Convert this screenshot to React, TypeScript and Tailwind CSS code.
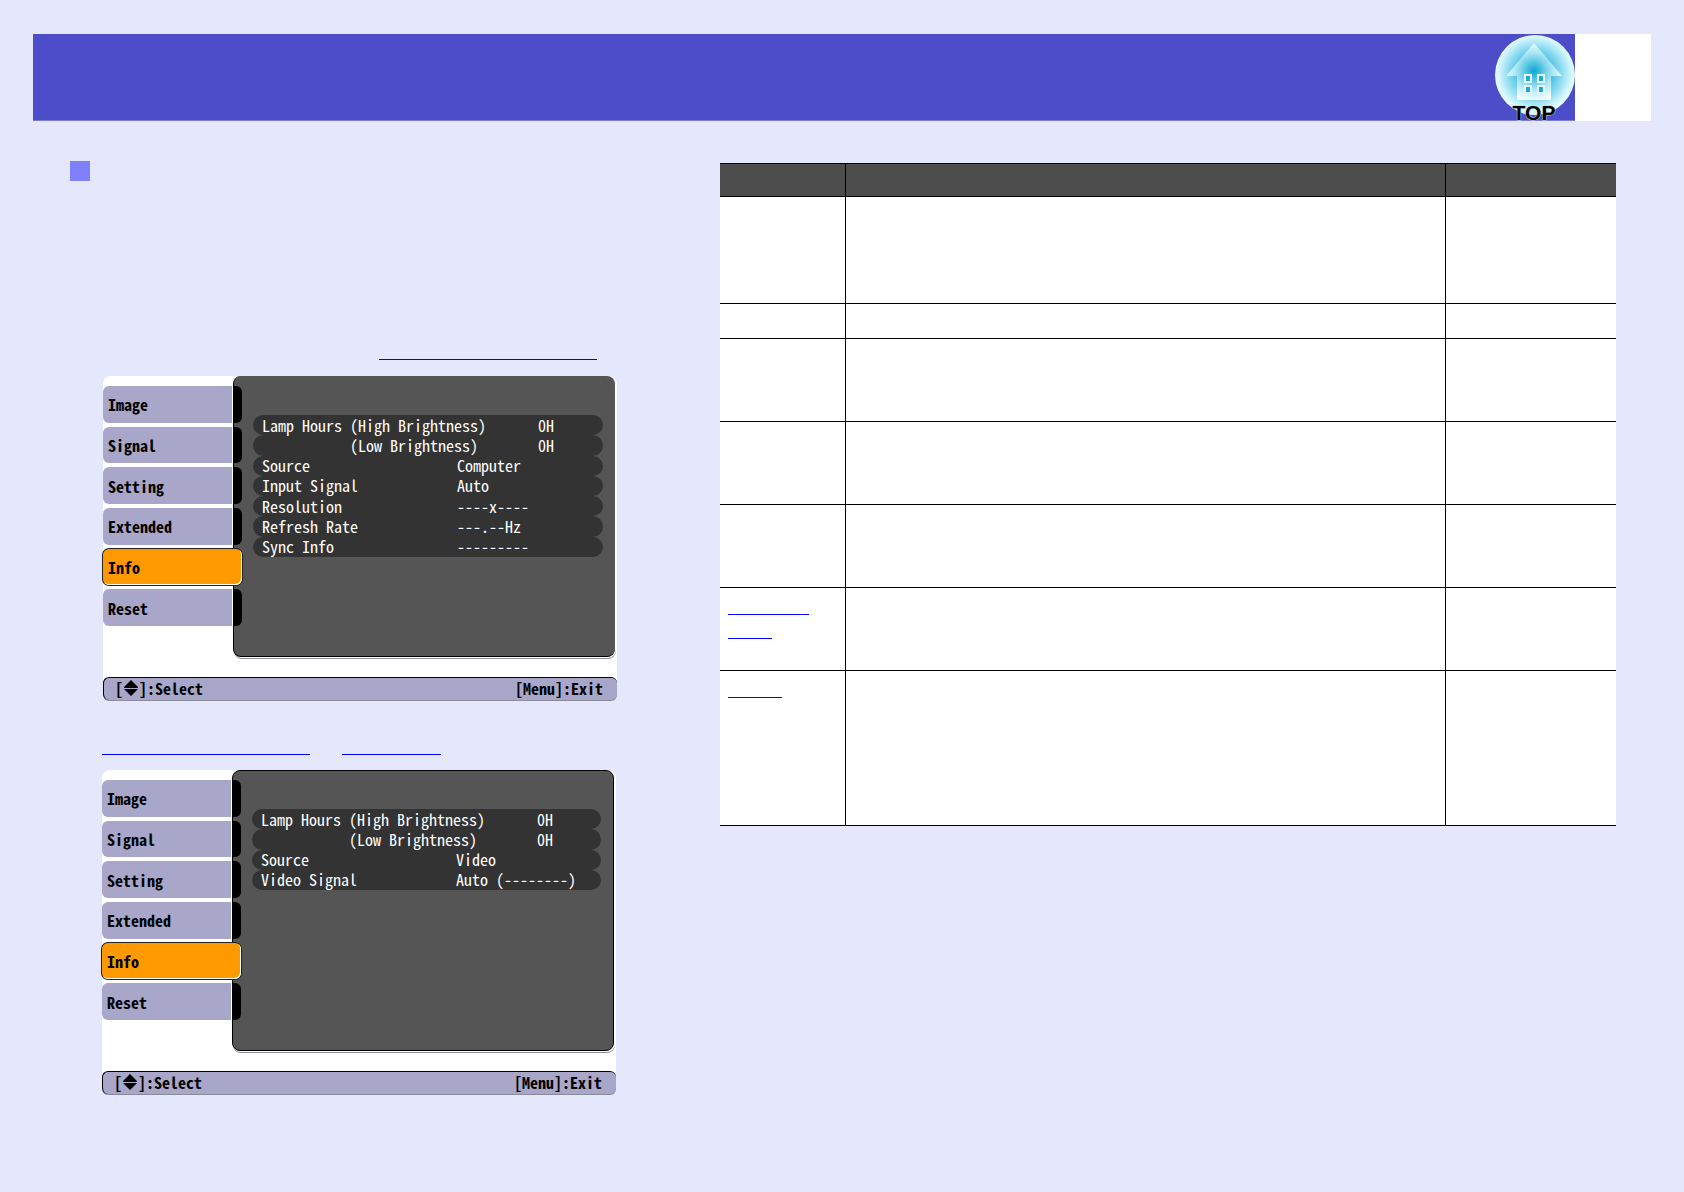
import React from 'react';

type InfoRow = {
  label: string;
  value: string;
  wide?: boolean;
};

const tabs = ['Image', 'Signal', 'Setting', 'Extended', 'Info', 'Reset'];

const lampRows: InfoRow[] = [
  { label: 'Lamp Hours (High Brightness)', value: '0H', wide: true },
  { label: '           (Low Brightness)', value: '0H', wide: true },
];

const computerRows: InfoRow[] = [
  ...lampRows,
  { label: 'Source', value: 'Computer' },
  { label: 'Input Signal', value: 'Auto' },
  { label: 'Resolution', value: '----x----' },
  { label: 'Refresh Rate', value: '---.--Hz' },
  { label: 'Sync Info', value: '---------' },
];

const videoRows: InfoRow[] = [
  ...lampRows,
  { label: 'Source', value: 'Video' },
  { label: 'Video Signal', value: 'Auto (--------)' },
];

// Row heights of the table, with the widths of the links in the first cell
const tableRows = [
  { height: 'h-[107px]', links: [] },
  { height: 'h-[35px]', links: [] },
  { height: 'h-[83px]', links: [] },
  { height: 'h-[83px]', links: [] },
  { height: 'h-[83px]', links: [] },
  { height: 'h-[83px]', links: ['w-[81px]', 'w-[44px]'] },
  { height: 'h-[155px]', links: ['w-[54px]'] },
];

function HomeLogo() {
  return (
    <svg viewBox="0 0 80 86" className="w-20 h-[86px] overflow-visible" role="img" aria-label="Top">
      <defs>
        <radialGradient id="ball" cx="50%" cy="48%" r="52%">
          <stop offset="0" stopColor="#009fd0" />
          <stop offset="0.35" stopColor="#3cbadf" />
          <stop offset="0.65" stopColor="#8fdcf1" />
          <stop offset="0.88" stopColor="#d6f7fd" />
          <stop offset="1" stopColor="#ecfeff" />
        </radialGradient>
        <radialGradient id="house" gradientUnits="userSpaceOnUse" cx="39" cy="36" r="30">
          <stop offset="0" stopColor="#0aa5d3" />
          <stop offset="0.3" stopColor="#5ac7e4" />
          <stop offset="0.65" stopColor="#b4e9f6" />
          <stop offset="1" stopColor="#f4fdff" />
        </radialGradient>
      </defs>
      <circle cx="40" cy="40" r="40" fill="url(#ball)" />
      <path d="M39 8 L67 41 H56 V65 H22 V41 H11 Z" fill="url(#house)" />
      <g fill="#1fa8d0" stroke="#e4f9fe" strokeWidth="2">
        <rect x="30" y="40" width="6" height="7" />
        <rect x="43" y="40" width="6" height="7" />
        <rect x="30" y="51" width="6" height="7" />
        <rect x="43" y="51" width="6" height="7" />
      </g>
      <text
        x="39"
        y="85"
        textAnchor="middle"
        fontFamily="Liberation Sans, Arial, sans-serif"
        fontWeight="bold"
        fontSize="21"
        fill="#000"
        stroke="#b9d3dc"
        strokeWidth="1"
        paintOrder="stroke"
      >
        TOP
      </text>
    </svg>
  );
}

type MenuScreenProps = {
  rows: InfoRow[];
  rowsBox: string;
  outline: string;
};

function MenuScreen({ rows, rowsBox, outline }: MenuScreenProps) {
  return (
    <div className="w-full max-w-[514px] bg-white rounded-t-lg rounded-b-md text-base leading-5 font-bold font-['Noto_Sans_Mono_CJK_JP','Liberation_Mono',monospace]">
      <div className="flex h-[281px]">
        <div className="w-[130px] shrink-0 pt-[10px] pb-[31px] flex flex-col gap-1">
          {tabs.map((tab) =>
            tab === 'Info' ? (
              <button
                key={tab}
                type="button"
                className="relative z-10 flex-1 w-[139px] pl-[5px] text-left rounded-md bg-[#ff9900] text-black shadow-[inset_-1px_-1px_0_#fff,0_0_0_1px_#222]"
              >
                {tab}
              </button>
            ) : (
              <div key={tab} className="flex-1 flex w-[139px]">
                <button
                  type="button"
                  className="relative z-10 w-[129px] pl-[5px] text-left rounded-l-md bg-[#a9a7c9] text-black"
                >
                  {tab}
                </button>
                <span className="relative z-10 ml-px flex-1 rounded-r-md bg-black" />
              </div>
            )
          )}
        </div>

        <div className={`flex-1 mr-[2px] rounded-lg border-l border-b border-black bg-[#555555] shadow-[1px_1px_0_#fff,1px_2px_0_#8a8a98] ${outline}`}>
          <dl className={`ml-[19px] mr-3 flex flex-col leading-[18px] font-medium ${rowsBox}`}>
            {rows.map((row) => (
              <div key={row.label} className="flex flex-1 items-center pl-[9px] pb-px rounded-full bg-[#333333] text-white">
                {/* relative keeps the descenders above the next row */}
                <dt className={`relative whitespace-pre ${row.wide ? 'w-[276px]' : 'w-[195px]'}`}>{row.label}</dt>
                <dd className="relative whitespace-pre">{row.value}</dd>
              </div>
            ))}
          </dl>
        </div>
      </div>

      <div className="mt-5 h-[23px] pb-[3px] pl-[11px] pr-[14px] flex items-center justify-between rounded-md border-t border-l border-black bg-[#a9a7c9] text-black shadow-[0_1px_0_#8a8a98]">
        <span className="flex items-center">
          [
          <svg viewBox="0 0 16 16" className="w-4 h-4" aria-hidden="true">
            <path d="M8 0 L15 7 V8 H1 V7 Z M1 9 H15 L8 16 Z" />
          </svg>
          ]:Select
        </span>
        <span>[Menu]:Exit</span>
      </div>
    </div>
  );
}

export default function App() {
  return (
    <div className="min-h-screen bg-[#e5e8fc] px-[33px] pt-[34px] pb-12 font-['Liberation_Sans',Arial,sans-serif]">
      {/* Header */}
      <header className="flex h-[87px]">
        <div className="flex-1 flex justify-end bg-[#4d4dc9] border-b border-[#7b7bdc]">
          <a href="#top" className="mt-px">
            <HomeLogo />
          </a>
        </div>
        <div className="w-[76px] bg-white" />
      </header>

      <main className="flex items-start">
        {/* Menu screens */}
        <section className="w-[687px] shrink-0 pl-[37px] pt-10">
          <div className="w-5 h-5 bg-[#8080ff]" />
          <div className="pl-8 pt-[178px]">
            <a href="#computer" aria-label="Computer source" className="block w-[218px] ml-[277px] h-px bg-[#0000ff]" />
          </div>
          <div className="mt-4 pl-[33px]">
            <MenuScreen rows={computerRows} rowsBox="mt-[39px] h-[142px]" outline="" />
          </div>
          <div className="mt-[54px] pl-8 flex gap-8">
            <a href="#video" aria-label="Video source" className="w-[208px] h-px bg-[#0000ff]" />
            <a href="#component" aria-label="Component source" className="w-[99px] h-px bg-[#0000ff]" />
          </div>
          <div className="mt-[15px] pl-8">
            <MenuScreen rows={videoRows} rowsBox="mt-[38px] h-[81px]" outline="border-t border-r" />
          </div>
        </section>

        {/* Table */}
        <section className="flex-1 pt-[42px] pr-[35px]">
          <table className="w-full table-fixed border-collapse bg-white border-y border-black">
            <colgroup>
              <col className="w-[14%]" />
              <col className="w-[67%]" />
              <col className="w-[19%]" />
            </colgroup>
            <thead>
              <tr className="h-[33px] bg-[#4d4d4d]">
                <th className="border-r border-black" />
                <th className="border-r border-black" />
                <th />
              </tr>
            </thead>
            <tbody>
              {tableRows.map((row, i) => (
                <tr key={i} className={`${row.height} border-t border-black`}>
                  <td className="border-r border-black px-2 pt-[26px] align-top">
                    <div className="flex flex-col gap-[23px]">
                      {row.links.map((width) => (
                        <a key={width} href="#info" aria-label="Item details" className={`${width} h-px bg-[#0000ff]`} />
                      ))}
                    </div>
                  </td>
                  <td className="border-r border-black" />
                  <td />
                </tr>
              ))}
            </tbody>
          </table>
        </section>
      </main>
    </div>
  );
}
